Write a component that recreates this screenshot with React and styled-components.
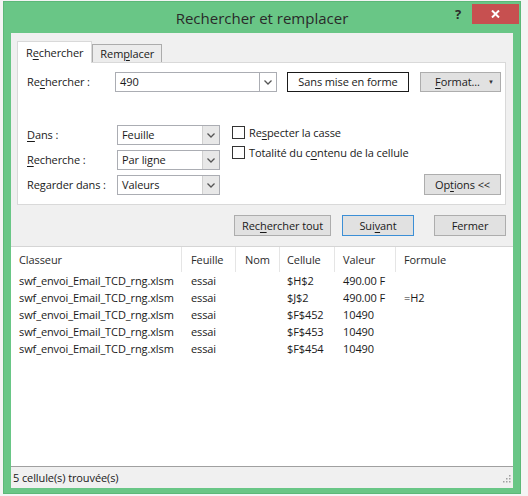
import React from "react";
import styled, { createGlobalStyle } from "styled-components";

const GlobalStyle = createGlobalStyle`
  html, body {
    margin: 0;
    padding: 0;
    background: #f4f4f4;
  }
  body {
    font-family: "Open Sans", "Noto Sans", "Liberation Sans", sans-serif;
    font-size: 11px;
    letter-spacing: -0.1px;
    color: #1a1a1a;
  }
`;

const Window = styled.div`
  width: 518px;
  height: 493px;
  margin: 1px 0 0 3px;
  background: #69c686;
  border: 1px solid #5cb878;
  box-sizing: border-box;
  display: flex;
  flex-direction: column;
`;

const TitleBar = styled.div`
  height: 31px;
  display: grid;
  grid-template-columns: 1fr auto 1fr;
  align-items: start;
`;

const Title = styled.div`
  font-size: 15px;
  letter-spacing: 0;
  color: #2a2a2a;
  line-height: 31px;
  padding-top: 1px;
`;

const Controls = styled.div`
  justify-self: end;
  display: flex;
  align-items: flex-start;
  padding-top: 2px;
  padding-right: 1px;
`;

const Help = styled.div`
  font-size: 13px;
  font-weight: 700;
  color: #2b2b2b;
  padding: 0 11px 0 0;
  line-height: 20px;
`;

const Close = styled.div`
  width: 47px;
  height: 20px;
  background: #c75050;
  display: flex;
  align-items: center;
  justify-content: center;
`;

const Client = styled.div`
  margin: 0 7px 5px 7px;
  flex: 1;
  background: #f0f0f0;
  display: flex;
  flex-direction: column;
`;

const Tabs = styled.div`
  display: flex;
  align-items: flex-end;
  margin: 7px 0 0 6px;
  height: 22px;
`;

const Tab = styled.div`
  height: ${(p) => (p.$active ? "22px" : "18px")};
  padding: 0 ${(p) => (p.$active ? "8px" : "7px")} 1px;
  box-sizing: border-box;
  display: flex;
  align-items: center;
  background: ${(p) => (p.$active ? "#ffffff" : "#ececec")};
  border: 1px solid ${(p) => (p.$active ? "#d9d9d9" : "#acacac")};
  border-bottom: none;
  margin-bottom: ${(p) => (p.$active ? "-1px" : "0")};
  position: relative;
  z-index: ${(p) => (p.$active ? 1 : 0)};
  color: #1a1a1a;
`;

const Key = styled.span`
  text-decoration: underline;
  text-underline-offset: 2px;
`;

const Panel = styled.div`
  margin: 0 7px 0 6px;
  background: #ffffff;
  border: 1px solid #d9d9d9;
  height: 143px;
  box-sizing: border-box;
  padding: 9px 4px 0 8px;
`;

const FindRow = styled.div`
  display: flex;
  align-items: center;
  height: 20px;
`;

const Label = styled.div`
  width: ${(p) => p.$w}px;
  flex-shrink: 0;
  padding: 0 0 2px 1px;
  white-space: nowrap;
`;

const Combo = styled.div`
  width: ${(p) => p.$w}px;
  height: 20px;
  box-sizing: border-box;
  border: 1px solid #abadb3;
  background: #ffffff;
  display: flex;
  align-items: stretch;
`;

const ComboValue = styled.div`
  flex: 1;
  padding: 0 0 1px 4px;
  display: flex;
  align-items: center;
`;

const ComboArrow = styled.div`
  width: 16px;
  display: flex;
  align-items: center;
  justify-content: center;
  background: ${(p) => (p.$flat ? "#ffffff" : "#e8e8e8")};
  border-left: 1px solid ${(p) => (p.$flat ? "#abadb3" : "#d0d0d0")};
`;

const Button = styled.div`
  width: ${(p) => p.$w}px;
  height: ${(p) => p.$h || 21}px;
  margin-left: ${(p) => p.$ml || 0}px;
  box-sizing: border-box;
  padding-bottom: 1px;
  display: flex;
  align-items: center;
  justify-content: center;
  background: ${(p) => (p.$plain ? "#ffffff" : "#e1e1e1")};
  border: 1px solid
    ${(p) => (p.$plain ? "#1a1a1a" : p.$focus ? "#3c8fd6" : "#adadad")};
  color: #1a1a1a;
  flex-shrink: 0;
  white-space: nowrap;
`;

const FormatText = styled.span`
  flex: 1;
  text-align: center;
  padding-left: 6px;
`;

const Caret = styled.span`
  width: 12px;
  font-size: 6px;
  color: #333;
`;

const OptionsArea = styled.div`
  display: flex;
  margin-top: 33px;
  height: 70px;
`;

const Selects = styled.div`
  display: flex;
  flex-direction: column;
  gap: 5px;
`;

const SelectRow = styled.div`
  display: flex;
  align-items: center;
  height: 20px;
`;

const Checks = styled.div`
  margin-left: 12px;
  display: flex;
  flex-direction: column;
  gap: 6px;
`;

const CheckRow = styled.div`
  display: flex;
  align-items: center;
  height: 14px;
  gap: 4px;
  white-space: nowrap;
`;

const Box = styled.div`
  width: 13px;
  height: 13px;
  box-sizing: border-box;
  border: 1px solid #333333;
  background: #ffffff;
`;

const OptionsCol = styled.div`
  margin-left: auto;
  display: flex;
  align-items: flex-end;
`;

const ActionRow = styled.div`
  display: flex;
  justify-content: flex-end;
  margin: 10px 7px 0 0;
  height: 21px;
`;

const List = styled.div`
  margin-top: 10px;
  flex: 1;
  background: #ffffff;
  border-top: 1px solid #d5d5d5;
  display: flex;
  flex-direction: column;
`;

const HeadRow = styled.div`
  display: flex;
  height: 25px;
  align-items: stretch;
  color: #2b2b2b;
`;

const HeadCell = styled.div`
  width: ${(p) => (p.$w ? `${p.$w}px` : "auto")};
  flex: ${(p) => (p.$w ? "none" : 1)};
  box-sizing: border-box;
  padding-left: ${(p) => p.$pl}px;
  border-right: ${(p) => (p.$w ? "1px solid #e5e5e5" : "none")};
  display: flex;
  align-items: center;
`;

const Rows = styled.div`
  flex: 1;
`;

const Row = styled.div`
  display: flex;
  height: 17px;
  align-items: center;
`;

const Cell = styled.div`
  width: ${(p) => (p.$w ? `${p.$w}px` : "auto")};
  flex: ${(p) => (p.$w ? "none" : 1)};
  box-sizing: border-box;
  padding-left: ${(p) => p.$pl}px;
  white-space: nowrap;
`;

const StatusBar = styled.div`
  height: 21px;
  border-top: 1px solid #a0a0a0;
  background: #f0f0f0;
  display: flex;
  align-items: center;
  justify-content: space-between;
  padding: 0 2px;
`;

const Chevron = () => (
  <svg width="8" height="5" viewBox="0 0 8 5">
    <path d="M0.5 0.5 L4 4 L7.5 0.5" fill="none" stroke="#555" strokeWidth="1.3" />
  </svg>
);

const Grip = () => (
  <svg width="10" height="10" viewBox="0 0 10 10">
    {[
      [8, 2],
      [8, 5],
      [5, 5],
      [8, 8],
      [5, 8],
      [2, 8],
    ].map(([x, y]) => (
      <rect key={`${x}-${y}`} x={x} y={y} width="1.5" height="1.5" fill="#a0a0a0" />
    ))}
  </svg>
);

const columns = [
  { key: "classeur", title: "Classeur", w: 171, pl: 8 },
  { key: "feuille", title: "Feuille", w: 54, pl: 9 },
  { key: "nom", title: "Nom", w: 44, pl: 9 },
  { key: "cellule", title: "Cellule", w: 55, pl: 7 },
  { key: "valeur", title: "Valeur", w: 61, pl: 8 },
  { key: "formule", title: "Formule", pl: 8 },
];

const results = [
  { classeur: "swf_envoi_Email_TCD_rng.xlsm", feuille: "essai", nom: "", cellule: "$H$2", valeur: "490.00 F", formule: "" },
  { classeur: "swf_envoi_Email_TCD_rng.xlsm", feuille: "essai", nom: "", cellule: "$J$2", valeur: "490.00 F", formule: "=H2" },
  { classeur: "swf_envoi_Email_TCD_rng.xlsm", feuille: "essai", nom: "", cellule: "$F$452", valeur: "10490", formule: "" },
  { classeur: "swf_envoi_Email_TCD_rng.xlsm", feuille: "essai", nom: "", cellule: "$F$453", valeur: "10490", formule: "" },
  { classeur: "swf_envoi_Email_TCD_rng.xlsm", feuille: "essai", nom: "", cellule: "$F$454", valeur: "10490", formule: "" },
];

const Select = ({ label, value }) => (
  <SelectRow>
    <Label $w={90}>{label}</Label>
    <Combo $w={103}>
      <ComboValue>{value}</ComboValue>
      <ComboArrow>
        <Chevron />
      </ComboArrow>
    </Combo>
  </SelectRow>
);

export default function App() {
  return (
    <>
      <GlobalStyle />
      <Window>
        <TitleBar>
          <div />
          <Title>Rechercher et remplacer</Title>
          <Controls>
            <Help>?</Help>
            <Close>
              <svg width="9" height="8" viewBox="0 0 9 8">
                <path d="M1 0.5 L8 7.5 M8 0.5 L1 7.5" stroke="#fff" strokeWidth="2" />
              </svg>
            </Close>
          </Controls>
        </TitleBar>
        <Client>
          <Tabs>
            <Tab $active>
              R<Key>e</Key>chercher
            </Tab>
            <Tab>
              Rem<Key>p</Key>lacer
            </Tab>
          </Tabs>
          <Panel>
            <FindRow>
              <Label $w={88}>
                Re<Key>c</Key>hercher :
              </Label>
              <Combo $w={163}>
                <ComboValue>490</ComboValue>
                <ComboArrow $flat>
                  <Chevron />
                </ComboArrow>
              </Combo>
              <Button $w={122} $h={20} $ml={10} $plain>
                Sans mise en forme
              </Button>
              <Button $w={81} $h={20} $ml={11}>
                <FormatText>
                  <Key>F</Key>ormat...
                </FormatText>
                <Caret>▼</Caret>
              </Button>
            </FindRow>
            <OptionsArea>
              <Selects>
                <Select
                  label={
                    <>
                      <Key>D</Key>ans :
                    </>
                  }
                  value="Feuille"
                />
                <Select
                  label={
                    <>
                      <Key>R</Key>echerche :
                    </>
                  }
                  value="Par ligne"
                />
                <Select
                  label={
                    <>
                      Re<Key>g</Key>arder dans :
                    </>
                  }
                  value="Valeurs"
                />
              </Selects>
              <Checks>
                <CheckRow>
                  <Box />
                  <span>
                    Re<Key>s</Key>pecter la casse
                  </span>
                </CheckRow>
                <CheckRow>
                  <Box />
                  <span>
                    Totalité du c<Key>o</Key>ntenu de la cellule
                  </span>
                </CheckRow>
              </Checks>
              <OptionsCol>
                <Button $w={77}>
                  Op<Key>t</Key>ions &lt;&lt;
                </Button>
              </OptionsCol>
            </OptionsArea>
          </Panel>
          <ActionRow>
            <Button $w={97}>
              Rec<Key>h</Key>ercher tout
            </Button>
            <Button $w={72} $ml={11} $focus>
              Sui<Key>v</Key>ant
            </Button>
            <Button $w={72} $ml={20}>
              Fermer
            </Button>
          </ActionRow>
          <List>
            <HeadRow>
              {columns.map((c) => (
                <HeadCell key={c.key} $w={c.w} $pl={c.pl}>
                  {c.title}
                </HeadCell>
              ))}
            </HeadRow>
            <Rows>
              {results.map((r, i) => (
                <Row key={i}>
                  {columns.map((c) => (
                    <Cell key={c.key} $w={c.w} $pl={c.pl}>
                      {r[c.key]}
                    </Cell>
                  ))}
                </Row>
              ))}
            </Rows>
            <StatusBar>
              <span>5 cellule(s) trouvée(s)</span>
              <Grip />
            </StatusBar>
          </List>
        </Client>
      </Window>
    </>
  );
}
